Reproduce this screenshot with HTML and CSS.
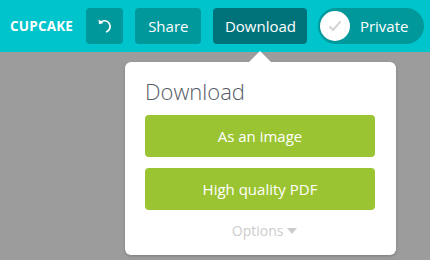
FILE: index.html
```html
<!DOCTYPE html>
<html lang="en">
<head>
    <meta charset="UTF-8">
    <title>Cupcake</title>
    <link rel="stylesheet" href="styles.css">
</head>
<body>
    <div class="topbar">
        <div class="logo">CUPCAKE</div>
        <button class="btn btn-undo" title="Undo">
            <svg width="20" height="20" viewBox="0 0 18 18">
                <path d="M5 5.5 A5.2 5.2 0 1 1 10.5 14.2" fill="none" stroke="#fff" stroke-width="1.5" stroke-linecap="round"/>
                <path d="M3.2 3.2 L3.6 7.4 L7.6 6.4 Z" fill="#fff"/>
            </svg>
        </button>
        <button class="btn">Share</button>
        <button class="btn btn-active">Download</button>
        <div class="toggle">
            <span class="knob">
                <svg width="14" height="12" viewBox="0 0 14 12">
                    <path d="M1.5 6.5 L5 10 L12.5 1.5" fill="none" stroke="#d4d4d4" stroke-width="2"/>
                </svg>
            </span>
            <span class="toggle-label">Private</span>
        </div>
    </div>

    <!-- Bảng tải xuống -->
    <div class="popup">
        <div class="arrow"></div>
        <h2>Download</h2>
        <button class="green">As an image</button>
        <button class="green">High quality PDF</button>
        <div class="options">Options <span class="caret"></span></div>
    </div>
</body>
</html>
```

FILE: styles.css
```css
body {
    margin: 0;
    background-color: #9c9c9c;
    font-family: "Open Sans", Arial, sans-serif;
    height: 260px;
    overflow: hidden;
}

.topbar {
    height: 52px;
    background-color: #00c4cc;
    display: flex;
    align-items: center;
    padding-left: 10px;
    box-sizing: border-box;
}

.topbar > * {
    flex-shrink: 0;
}

.logo {
    color: white;
    font-weight: bold;
    font-size: 13.5px;
    letter-spacing: 0.2px;
    margin-right: 13px;
}

.btn {
    height: 36px;
    padding: 0 13px;
    border: none;
    border-radius: 4px;
    background-color: #00989b;
    color: white;
    font-family: inherit;
    font-size: 15px;
    margin-right: 12px;
    display: flex;
    align-items: center;
}

.btn-undo {
    width: 37px;
    padding: 0;
    justify-content: center;
}

.btn-active {
    background-color: #00737a;
    width: 94px;
    padding: 0;
    justify-content: center;
    margin-right: 11px;
}

.toggle {
    flex: 0 0 106px;
    min-width: 106px;
    height: 36px;
    border-radius: 18px;
    background-color: #00989b;
    display: flex;
    align-items: center;
    padding: 0 16px 0 2px;
    box-sizing: border-box;
}

.knob {
    width: 30px;
    height: 30px;
    border-radius: 50%;
    background-color: white;
    display: flex;
    align-items: center;
    justify-content: center;
}

.toggle-label {
    color: white;
    font-size: 15px;
    margin-left: auto;
}

.popup {
    position: relative;
    margin: 10px 0 0 125px;
    width: 271px;
    height: 193px;
    background-color: white;
    border-radius: 6px;
    box-shadow: 0 1px 3px rgba(0, 0, 0, 0.2);
    padding: 14px 20px 0;
    box-sizing: border-box;
}

.arrow {
    position: absolute;
    top: -11px;
    left: 124px;
    width: 0;
    height: 0;
    border-left: 11px solid transparent;
    border-right: 11px solid transparent;
    border-bottom: 11px solid white;
}

h2 {
    margin: 0 0 8px;
    font-weight: 300;
    font-size: 22px;
    line-height: 31px;
    color: #555b66;
}

.green {
    display: block;
    width: 230px;
    height: 42px;
    border: none;
    border-radius: 4px;
    background-color: #9bc432;
    color: white;
    font-family: inherit;
    font-size: 15px;
    margin-bottom: 11px;
}

.options {
    text-align: center;
    color: #cccccc;
    font-size: 14px;
    margin-top: 11px;
    padding-left: 8px;
}

.caret {
    display: inline-block;
    width: 0;
    height: 0;
    border-left: 5px solid transparent;
    border-right: 5px solid transparent;
    border-top: 6px solid #cccccc;
    vertical-align: 2px;
}
```
